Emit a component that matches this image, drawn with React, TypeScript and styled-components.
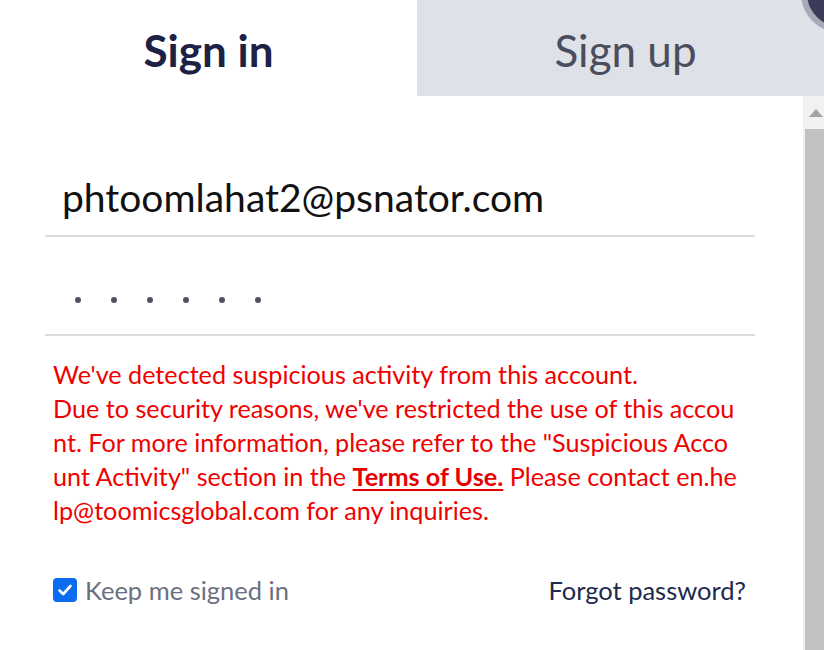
import React from 'react';
import styled, { createGlobalStyle } from 'styled-components';

const GlobalStyle = createGlobalStyle`
  html, body {
    margin: 0;
    padding: 0;
    background: #ffffff;
    overflow: hidden;
  }
  * {
    box-sizing: border-box;
  }
`;

const Page = styled.div`
  position: relative;
  width: 824px;
  height: 650px;
  overflow: hidden;
  background: #ffffff;
  font-family: Lato, "Noto Sans", sans-serif;
`;

const Tabs = styled.div`
  display: grid;
  grid-template-columns: 417px 417px;
  height: 96px;
`;

const Tab = styled.div<{ $active?: boolean }>`
  display: flex;
  align-items: center;
  justify-content: center;
  background: ${(p) => (p.$active ? '#ffffff' : '#dfe1e9')};
  color: ${(p) => (p.$active ? '#1d2245' : '#4a4e5c')};
  font-size: 44px;
  font-weight: ${(p) => (p.$active ? 700 : 400)};
  padding-top: 3px;
`;

const CloseBall = styled.div`
  position: absolute;
  left: 801px;
  top: -47px;
  width: 80px;
  height: 80px;
  border-radius: 50%;
  background: #3b3d58;
  border: 6px solid #a7a9b8;
`;

const Body = styled.div`
  display: flex;
  height: 554px;
`;

const Content = styled.div`
  width: 803px;
  padding: 63px 48px 0 45px;
`;

const Field = styled.div<{ $height: number }>`
  display: flex;
  align-items: center;
  height: ${(p) => p.$height}px;
  border-bottom: 2px solid #dcdcdc;
  padding-left: 17px;
`;

const EmailText = styled.span`
  font-size: 39px;
  color: #111111;
  padding-bottom: 0;
`;

const Dots = styled.div`
  display: flex;
  gap: 30px;
  padding: 28px 0 0 13px;
`;

const Dot = styled.span`
  width: 6px;
  height: 6px;
  border-radius: 50%;
  background: #4d5162;
`;

const ErrorText = styled.p`
  margin: 21px 0 0 8px;
  color: #f00000;
  font-size: 25.2px;
  line-height: 34px;
  white-space: nowrap;
`;

const TermsLink = styled.a`
  color: #e60000;
  font-weight: 700;
  text-decoration: underline;
  text-underline-offset: 3px;
`;

const OptionsRow = styled.div`
  display: flex;
  align-items: center;
  justify-content: space-between;
  margin: 48px 9px 0 8px;
  font-size: 25.5px;
`;

const KeepLabel = styled.label`
  display: flex;
  align-items: center;
  gap: 8px;
  color: #6b7080;
`;

const CheckBox = styled.span`
  display: flex;
  align-items: center;
  justify-content: center;
  width: 24px;
  height: 24px;
  border-radius: 4px;
  background: #0b6cf2;
`;

const ForgotLink = styled.a`
  color: #1d2a4d;
`;

const Scrollbar = styled.div`
  display: flex;
  flex-direction: column;
  width: 21px;
  background: #f1f1f1;
`;

const ArrowUp = styled.div`
  display: flex;
  align-items: center;
  justify-content: center;
  height: 33px;
  padding-left: 4px;
`;

const Thumb = styled.div`
  flex: 1;
  margin-left: 2px;
  background: #c1c1c1;
`;

export default function App() {
  return (
    <Page>
      <GlobalStyle />
      <Tabs>
        <Tab $active>Sign in</Tab>
        <Tab>Sign up</Tab>
      </Tabs>
      <CloseBall />
      <Body>
        <Content>
          <Field $height={78}>
            <EmailText>phtoomlahat2@psnator.com</EmailText>
          </Field>
          <Field $height={99}>
            <Dots>
              {[0, 1, 2, 3, 4, 5].map((i) => (
                <Dot key={i} />
              ))}
            </Dots>
          </Field>
          <ErrorText>
            We've detected suspicious activity from this account.
            <br />
            Due to security reasons, we've restricted the use of this accou
            <br />
            nt. For more information, please refer to the "Suspicious Acco
            <br />
            unt Activity" section in the <TermsLink>Terms of Use.</TermsLink> Please contact en.he
            <br />
            lp@toomicsglobal.com for any inquiries.
          </ErrorText>
          <OptionsRow>
            <KeepLabel>
              <CheckBox>
                <svg width="16" height="16" viewBox="0 0 16 16">
                  <path d="M2.5 8.5 L6.2 12 L13.5 4" fill="none" stroke="#ffffff" strokeWidth="2.6" strokeLinecap="round" strokeLinejoin="round" />
                </svg>
              </CheckBox>
              Keep me signed in
            </KeepLabel>
            <ForgotLink>Forgot password?</ForgotLink>
          </OptionsRow>
        </Content>
        <Scrollbar>
          <ArrowUp>
            <svg width="14" height="8" viewBox="0 0 14 8">
              <path d="M0 8 L7 0 L14 8 Z" fill="#a3a3a3" />
            </svg>
          </ArrowUp>
          <Thumb />
        </Scrollbar>
      </Body>
    </Page>
  );
}
